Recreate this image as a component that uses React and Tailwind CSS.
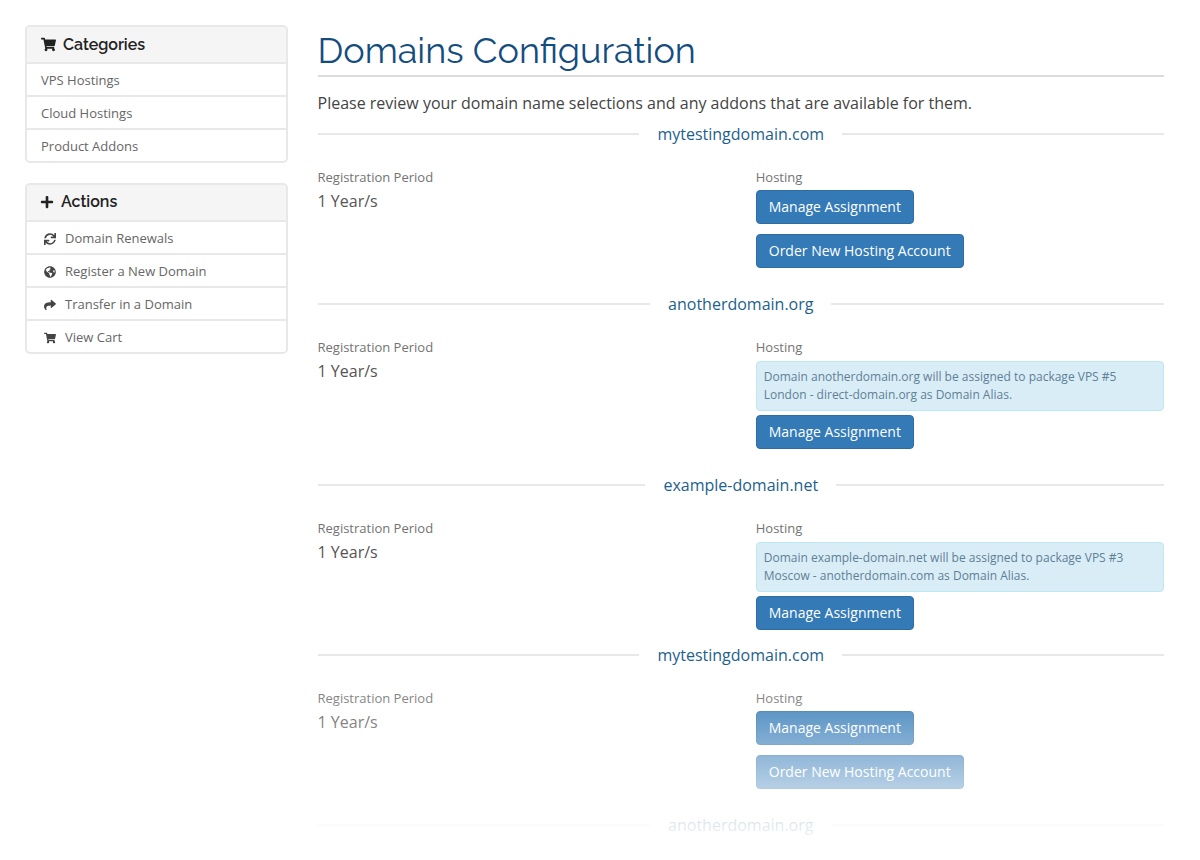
import React from "react";
import { FaShoppingCart, FaPlus, FaSync, FaGlobeAmericas, FaShare } from "react-icons/fa";

function Panel({ icon, title, gap, items, head = "" }) {
  return (
    <div className="rounded-[5px] border-2 border-[#e8e8e8] bg-white overflow-hidden">
      <div className={`h-[37px] flex items-center bg-[#f5f5f5] border-b-2 border-[#e8e8e8] pl-[14px] text-[#222] ${gap} ${head}`}>
        {icon}
        <span className="font-['Raleway','Lato',sans-serif] font-semibold text-[16px]">{title}</span>
      </div>
      {items.map((it, i) => {
        const last = i === items.length - 1;
        return (
          <div key={it.label} className={`flex items-center pl-[14px] pt-[3px] text-[13px] text-[#666] ${last ? "h-[31px]" : "h-[33px] border-b-2 border-[#e8e8e8]"}`}>
            {it.icon && <span className="w-[24px] flex justify-start pl-[3px] text-[#444]">{it.icon}</span>}
            <span>{it.label}</span>
          </div>
        );
      })}
    </div>
  );
}

function Section({ name, alert, order, tall, bare }) {
  const btn = "h-[34px] px-[12px] rounded-[4px] border border-[#2e6da4] bg-[#337ab7] text-white text-[14px]";
  return (
    <div className={bare ? "h-[24px]" : tall ? "h-[181px]" : "h-[170px]"}>
      <div className="flex items-center h-[24px]">
        <div className="flex-1 h-[2px] bg-[#e8e8e8]" />
        <div className="px-[18px] text-[16px] text-[#1d5f8e] leading-[24px]">{name}</div>
        <div className="flex-1 h-[2px] bg-[#e8e8e8]" />
      </div>
      {!bare && (
        <div className="grid grid-cols-2 gap-x-[30px] mt-[22px] text-[13px] leading-[18px] text-[#737373]">
          <div>
            <div>Registration Period</div>
            <div className="text-[16px] leading-[22px] text-[#555] mt-[4px]">1 Year/s</div>
          </div>
          <div>
            <div>Hosting</div>
            {alert && (
              <div className="mt-[5px] mb-[5px] h-[50px] rounded-[4px] border border-[#bce8f1] bg-[#d9edf7] px-[7px] py-[6px] text-[12px] leading-[18px] text-[#5f7f96]">
                {alert}
              </div>
            )}
            <div className={`flex flex-col items-start gap-[10px] ${alert ? "-mt-px" : "mt-[4px]"}`}>
              <button className={btn}>Manage Assignment</button>
              {order && <button className={btn}>Order New Hosting Account</button>}
            </div>
          </div>
        </div>
      )}
    </div>
  );
}

export default function App() {
  return (
    <div className="relative h-[860px] overflow-hidden bg-white font-['Open_Sans',sans-serif] flex pl-[25px] pr-[36px] pt-[25px] gap-[29.5px]">
      <aside className="w-[263px] shrink-0 flex flex-col gap-[20px]">
        <Panel
          title="Categories"
          gap="gap-[7px]"
          icon={<FaShoppingCart className="text-[15px]" />}
          items={[{ label: "VPS Hostings" }, { label: "Cloud Hostings" }, { label: "Product Addons" }]}
        />
        <Panel
          title="Actions"
          gap="gap-[7px]"
          head="pb-[2px]"
          icon={<FaPlus className="text-[14px] -ml-px" />}
          items={[
            { label: "Domain Renewals", icon: <FaSync className="text-[12px]" /> },
            { label: "Register a New Domain", icon: <FaGlobeAmericas className="text-[12px]" /> },
            { label: "Transfer in a Domain", icon: <FaShare className="text-[12px]" /> },
            { label: "View Cart", icon: <FaShoppingCart className="text-[12px]" /> },
          ]}
        />
      </aside>
      <main className="flex-1 min-w-0">
        <h1 className="font-['Raleway','Lato',sans-serif] text-[36px] leading-[50px] text-[#134d80] border-b-2 border-[#dcdcdc] h-[52px]">Domains Configuration</h1>
        <p className="text-[16px] leading-[22px] text-[#444] mt-[15px] mb-[8px]">Please review your domain name selections and any addons that are available for them.</p>
        <Section name="mytestingdomain.com" order />
        <Section name="anotherdomain.org" tall alert="Domain anotherdomain.org will be assigned to package VPS #5 London - direct-domain.org as Domain Alias." />
        <Section name="example-domain.net" alert="Domain example-domain.net will be assigned to package VPS #3 Moscow - anotherdomain.com as Domain Alias." />
        <Section name="mytestingdomain.com" order />
        <Section name="anotherdomain.org" bare />
      </main>
      <div className="absolute left-0 right-0 top-[675px] h-[185px] bg-gradient-to-b from-white/0 to-white to-[95%] pointer-events-none" />
    </div>
  );
}
